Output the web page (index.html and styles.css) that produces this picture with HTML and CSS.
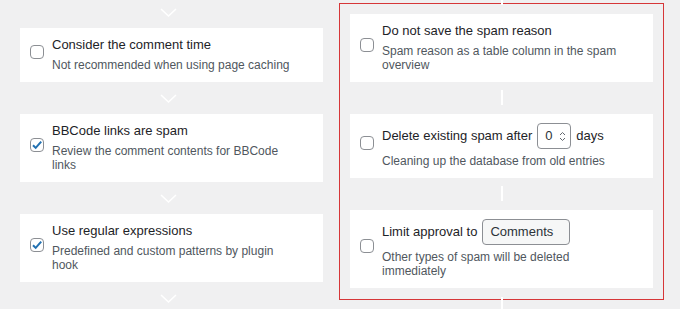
FILE: index.html
```html
<!DOCTYPE html>
<html lang="en">
<head>
    <meta charset="UTF-8">
    <title>Antispam Settings</title>
    <link rel="stylesheet" href="styles.css">
</head>
<body>
    <div class="layout">
        <div class="flow">
            <div class="arrow"><svg width="17" height="9" viewBox="0 0 17 9"><path d="M1 1 L8.5 8 L16 1"/></svg></div>
            <div class="card">
                <span class="check"></span>
                <div class="text">
                    <div class="title">Consider the comment time</div>
                    <div class="desc">Not recommended when using page caching</div>
                </div>
            </div>
            <div class="arrow"><svg width="17" height="9" viewBox="0 0 17 9"><path d="M1 1 L8.5 8 L16 1"/></svg></div>
            <div class="card">
                <span class="check checked"><svg width="12" height="12" viewBox="0 0 12 12"><path d="M2 6.2 L4.7 8.9 L10.2 2.6"/></svg></span>
                <div class="text">
                    <div class="title">BBCode links are spam</div>
                    <div class="desc">Review the comment contents for BBCode links</div>
                </div>
            </div>
            <div class="arrow"><svg width="17" height="9" viewBox="0 0 17 9"><path d="M1 1 L8.5 8 L16 1"/></svg></div>
            <div class="card">
                <span class="check checked"><svg width="12" height="12" viewBox="0 0 12 12"><path d="M2 6.2 L4.7 8.9 L10.2 2.6"/></svg></span>
                <div class="text">
                    <div class="title">Use regular expressions</div>
                    <div class="desc">Predefined and custom patterns by plugin hook</div>
                </div>
            </div>
            <div class="arrow"><svg width="17" height="9" viewBox="0 0 17 9"><path d="M1 1 L8.5 8 L16 1"/></svg></div>
        </div>

        <div class="flow flow-right">
            <div class="group">
                <div class="card">
                    <span class="check"></span>
                    <div class="text">
                        <div class="title">Do not save the spam reason</div>
                        <div class="desc">Spam reason as a table column in the spam overview</div>
                    </div>
                </div>
                <div class="card">
                    <span class="check"></span>
                    <div class="text">
                        <div class="title has-control">
                            Delete existing spam after
                            <span class="number">0<svg width="7" height="11" viewBox="0 0 7 11"><path d="M1 4 L3.5 1.5 L6 4 M1 7 L3.5 9.5 L6 7"/></svg></span>
                            days
                        </div>
                        <div class="desc">Cleaning up the database from old entries</div>
                    </div>
                </div>
                <div class="card">
                    <span class="check"></span>
                    <div class="text">
                        <div class="title has-control">
                            Limit approval to
                            <span class="select">Comments</span>
                        </div>
                        <div class="desc">Other types of spam will be deleted immediately</div>
                    </div>
                </div>
            </div>
        </div>
    </div>
</body>
</html>
```

FILE: styles.css
```css
body {
    margin: 0;
    background: #f0f0f1;
    font-family: "Liberation Sans", Arial, sans-serif;
    font-size: 13px;
    color: #1d2327;
    overflow: hidden;
}
.layout {
    display: flex;
    gap: 16px;
    padding-left: 20px;
}
.flow {
    width: 303px;
    margin-top: -4px;
}
.flow-right {
    width: auto;
    margin-top: 3px;
}
.arrow {
    height: 32px;
    display: flex;
    align-items: center;
    justify-content: center;
    padding-right: 7px;
}
.arrow path {
    fill: none;
    stroke: #fff;
    stroke-width: 1.5;
}
.card {
    position: relative;
    display: flex;
    align-items: center;
    gap: 8px;
    background: #fff;
    padding: 8px 24px 10px 10px;
}
.check {
    flex: none;
    box-sizing: border-box;
    width: 14px;
    height: 14px;
    margin-bottom: 4px;
    border: 1px solid #8c8f94;
    border-radius: 4px;
    background: #fff;
    display: flex;
    align-items: center;
    justify-content: center;
}
.check svg path {
    fill: none;
    stroke: #2271b1;
    stroke-width: 2;
}
.text {
    flex: 1;
}
.title {
    line-height: 18px;
}
.desc {
    margin-top: 4px;
    font-size: 12px;
    line-height: 14px;
    color: #50575e;
}
.title.has-control {
    display: flex;
    align-items: center;
    gap: 5px;
    height: 26px;
    margin-top: 1px;
}
.has-control + .desc {
    margin-top: 5px;
}
.number,
.select {
    box-sizing: border-box;
    height: 26px;
    border: 1px solid #8c8f94;
    border-radius: 4px;
    display: flex;
    align-items: center;
    color: #2c3338;
}
.number {
    width: 34px;
    padding-left: 7px;
    gap: 6px;
    background: #fff;
}
.number path {
    fill: none;
    stroke: #646970;
    stroke-width: 1;
}
.select {
    width: 88px;
    padding-left: 7px;
    background: #f6f7f7;
}
.group {
    width: 303px;
    border: 1px solid #d63638;
    padding: 10px 10px 11px;
}
.group .card + .card {
    margin-top: 32px;
}
.group .card::before,
.group .card:last-child::after {
    content: "";
    position: absolute;
    left: 50%;
    width: 2px;
    height: 15px;
    margin-left: -1px;
    background: #fff;
}
.group .card::before {
    top: -24px;
}
.group .card:last-child::after {
    bottom: -24px;
}
```
